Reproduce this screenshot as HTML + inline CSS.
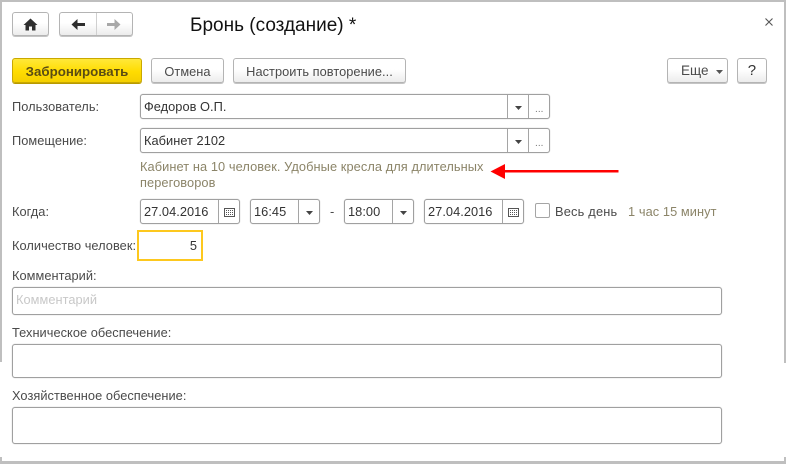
<!DOCTYPE html>
<html><head><meta charset="utf-8">
<style>
html,body{margin:0;padding:0;background:#fff}
#p{position:relative;width:786px;height:464px;overflow:hidden;background:#fff;font-family:"Liberation Sans",sans-serif;font-size:12.8px;letter-spacing:.04px;color:#4a4a4a}
#p div{position:absolute;box-sizing:border-box}
.t{white-space:nowrap;line-height:14px}
.b{background:linear-gradient(#fff,#fff 45%,#ececec);border:1px solid #b4b4b4;border-radius:3px;box-shadow:0 1px 0 #c4c4c4;text-align:center;line-height:23px;color:#4a4a4a;white-space:nowrap}
.f{background:#fff;border:1px solid #a0a0a0;border-radius:3px;box-shadow:0 0 1px #b8b8b8}
.v{color:#333;white-space:nowrap;line-height:14px}
.d{width:1px;background:#a5a5a5}
.g{background:#bfbfbf}
.h{color:#8b8468;letter-spacing:.08px}
svg{position:absolute;display:block}
</style></head><body><div id="p">
<div class="g" style="left:0;top:0;width:786px;height:2px"></div>
<div class="g" style="left:0;top:0;width:2px;height:362px"></div>
<div class="g" style="left:784px;top:0;width:2px;height:363px"></div>
<div class="g" style="left:0;top:461px;width:786px;height:3px"></div>
<div class="g" style="left:0;top:457px;width:2px;height:7px"></div>
<div class="g" style="left:784px;top:457px;width:2px;height:7px"></div>

<div class="b" style="left:12px;top:12px;width:37px;height:24px"></div>
<svg style="left:23px;top:18px" width="15" height="13" viewBox="0 0 15 13"><path d="M7.5 0.5L14.5 7H12.5V12.5H9V8.5H6V12.5H2.5V7H0.5Z" fill="#2e2e2e"/></svg>
<div class="b" style="left:59px;top:12px;width:74px;height:24px"></div>
<div style="left:96px;top:13px;width:1px;height:22px;background:#d0d0d0"></div>
<svg style="left:71px;top:18px" width="15" height="13" viewBox="0 0 15 13"><path d="M0.5 6.5L6.5 1V5H14V8H6.5V12Z" fill="#2e2e2e"/></svg>
<svg style="left:106px;top:18px" width="15" height="13" viewBox="0 0 15 13"><path d="M14.5 6.5L8.5 1V5H1V8H8.5V12Z" fill="#a8a8a8"/></svg>

<div class="t" style="left:190px;top:15px;font-size:19px;letter-spacing:0;line-height:22px;color:#111">Бронь (создание) *</div>
<svg style="left:765px;top:18px" width="8" height="8" viewBox="0 0 8 8"><path d="M0.5 0.5L7.5 7.5M7.5 0.5L0.5 7.5" stroke="#555" stroke-width="1.1" fill="none"/></svg>

<div class="b" style="left:12px;top:58px;width:130px;height:25px;background:linear-gradient(#ffe83a,#ffdc00 55%,#f4cf00);border:1px solid #c9a800;box-shadow:0 1px 0 #b89a00;font-weight:bold;font-size:13.3px;letter-spacing:0;color:#5a4c14;line-height:25px">Забронировать</div>
<div class="b" style="left:151px;top:58px;width:73px;height:25px;line-height:25px">Отмена</div>
<div class="b" style="left:233px;top:58px;width:173px;height:25px;line-height:25px">Настроить повторение...</div>
<div class="b" style="left:667px;top:58px;width:61px;height:25px"></div>
<div class="t" style="left:681px;top:64px;font-size:13.5px">Еще</div>
<svg style="left:716px;top:70px" width="7" height="4" viewBox="0 0 7 4"><path d="M0 0H7L3.5 4Z" fill="#555"/></svg>
<div class="b" style="left:737px;top:58px;width:30px;height:25px;line-height:23px;font-size:15px;color:#333">?</div>

<div class="t" style="left:12px;top:100px">Пользователь:</div>
<div class="f" style="left:140px;top:94px;width:410px;height:25px"></div>
<div class="v" style="left:144px;top:100px">Федоров О.П.</div>
<div class="d" style="left:507px;top:95px;height:23px"></div>
<div class="d" style="left:528px;top:95px;height:23px"></div>
<svg style="left:515px;top:106px" width="7" height="4" viewBox="0 0 7 4"><path d="M0 0H7L3.5 4Z" fill="#444"/></svg>
<div class="t" style="left:535px;top:104px;font-size:10px;color:#777;line-height:12px">...</div>

<div class="t" style="left:12px;top:134px">Помещение:</div>
<div class="f" style="left:140px;top:128px;width:410px;height:25px"></div>
<div class="v" style="left:144px;top:134px">Кабинет 2102</div>
<div class="d" style="left:507px;top:129px;height:23px"></div>
<div class="d" style="left:528px;top:129px;height:23px"></div>
<svg style="left:515px;top:140px" width="7" height="4" viewBox="0 0 7 4"><path d="M0 0H7L3.5 4Z" fill="#444"/></svg>
<div class="t" style="left:535px;top:138px;font-size:10px;color:#777;line-height:12px">...</div>

<div class="t h" style="left:140px;top:159px;line-height:16px">Кабинет на 10 человек. Удобные кресла для длительных<br>переговоров</div>

<svg style="left:490px;top:160px" width="130" height="24" viewBox="0 0 130 24"><path d="M13 10H128.5V12.5H13Z" fill="#f00"/><path d="M0.5 11.5L15 4V19Z" fill="#f00"/></svg>

<div class="t" style="left:12px;top:205px">Когда:</div>
<div class="f" style="left:140px;top:199px;width:100px;height:25px"></div>
<div class="v" style="left:144px;top:205px">27.04.2016</div>
<div class="d" style="left:218px;top:200px;height:23px"></div>
<svg style="left:224px;top:208px" width="11" height="9" viewBox="0 0 11 9"><path d="M0.5 0.5H10.5V8.5H0.5Z" fill="#fff" stroke="#555"/><path d="M2 2.5H10M2 4.5H10M2 6.5H10" stroke="#555" stroke-dasharray="1 1"/></svg>
<div class="f" style="left:250px;top:199px;width:70px;height:25px"></div>
<div class="v" style="left:254px;top:205px">16:45</div>
<div class="d" style="left:298px;top:200px;height:23px"></div>
<svg style="left:306px;top:211px" width="7" height="4" viewBox="0 0 7 4"><path d="M0 0H7L3.5 4Z" fill="#444"/></svg>
<div class="t" style="left:330px;top:205px">-</div>
<div class="f" style="left:344px;top:199px;width:70px;height:25px"></div>
<div class="v" style="left:348px;top:205px">18:00</div>
<div class="d" style="left:392px;top:200px;height:23px"></div>
<svg style="left:400px;top:211px" width="7" height="4" viewBox="0 0 7 4"><path d="M0 0H7L3.5 4Z" fill="#444"/></svg>
<div class="f" style="left:424px;top:199px;width:100px;height:25px"></div>
<div class="v" style="left:428px;top:205px">27.04.2016</div>
<div class="d" style="left:502px;top:200px;height:23px"></div>
<svg style="left:508px;top:208px" width="11" height="9" viewBox="0 0 11 9"><path d="M0.5 0.5H10.5V8.5H0.5Z" fill="#fff" stroke="#555"/><path d="M2 2.5H10M2 4.5H10M2 6.5H10" stroke="#555" stroke-dasharray="1 1"/></svg>
<div style="left:535px;top:203px;width:15px;height:15px;border:1px solid #a5a5a5;border-radius:2px;background:#fff"></div>
<div class="t" style="left:555px;top:205px;letter-spacing:.2px">Весь день</div>
<div class="t h" style="left:628px;top:205px">1 час 15 минут</div>

<div class="t" style="left:12px;top:239px">Количество человек:</div>
<div style="left:137px;top:230px;width:66px;height:31px;border:2px solid #fdc81e;background:#fff"></div>
<div class="v" style="left:150px;top:239px;width:47px;text-align:right">5</div>

<div class="t" style="left:12px;top:269px">Комментарий:</div>
<div class="f" style="left:12px;top:287px;width:710px;height:28px"></div>
<div class="t" style="left:16px;top:293px;color:#c8c8c8">Комментарий</div>
<div class="t" style="left:12px;top:326px">Техническое обеспечение:</div>
<div class="f" style="left:12px;top:344px;width:710px;height:34px"></div>
<div class="t" style="left:12px;top:389px">Хозяйственное обеспечение:</div>
<div class="f" style="left:12px;top:407px;width:710px;height:37px"></div>
</div></body></html>
